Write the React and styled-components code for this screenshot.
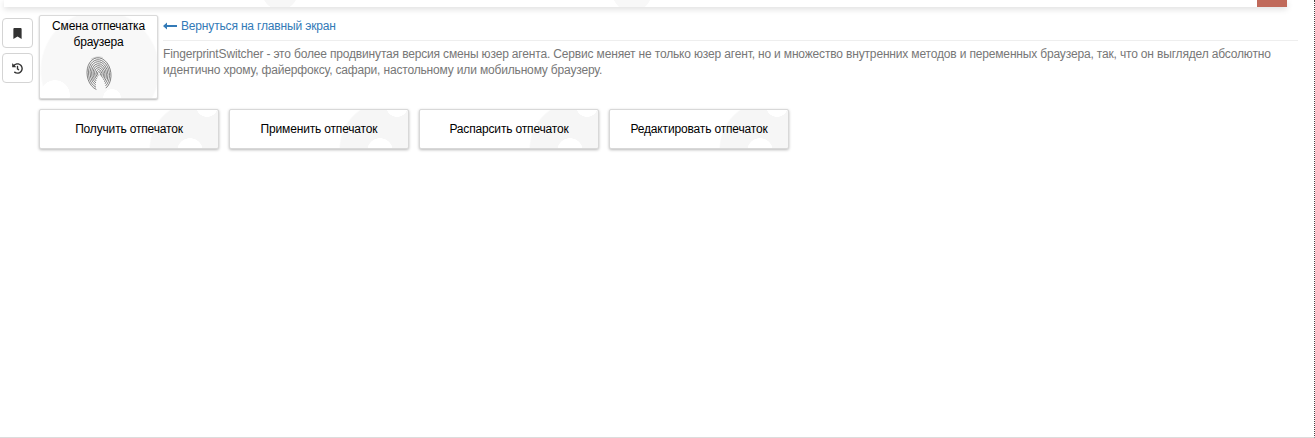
import React from 'react';
import styled, { createGlobalStyle } from 'styled-components';
import { FaBookmark, FaHistory } from 'react-icons/fa';

const GlobalStyle = createGlobalStyle`
  html, body {
    margin: 0;
    padding: 0;
    background: #fff;
    font-family: "Liberation Sans", Arial, sans-serif;
    font-size: 12px;
    letter-spacing: -0.165px;
  }
`;

const Page = styled.div`
  box-sizing: border-box;
  width: 1315px;
  height: 438px;
  overflow: hidden;
  border-bottom: 1px solid #dcdcdc;
  border-right: 1px dotted #444;
`;

const TopBar = styled.div`
  display: flex;
  justify-content: flex-end;
  width: 1283px;
  height: 7px;
  margin-left: 4px;
  background:
    radial-gradient(circle 18px at 276px -8px, #f7f7f7 97%, transparent),
    radial-gradient(circle 20px at 628px -8px, #f8f8f8 97%, transparent),
    #fff;
  box-shadow: 0 2px 6px rgba(0, 0, 0, 0.14);
`;

const CloseTab = styled.div`
  width: 30px;
  background: #c0695a;
`;

const Main = styled.div`
  display: flex;
  padding: 8px 16px 0 2px;
`;

const Sidebar = styled.div`
  display: flex;
  flex-direction: column;
  gap: 5px;
  width: 31px;
  margin: 3px 6px 0 0;
  flex: none;
`;

const SideButton = styled.button`
  display: flex;
  align-items: center;
  justify-content: center;
  box-sizing: border-box;
  width: 31px;
  height: 30px;
  padding: 0;
  background: #fff;
  border: 1px solid #d4d4d4;
  border-radius: 4px;
  color: #333;
  font-size: 11px;
`;

const Content = styled.div`
  flex: 1;
  min-width: 0;
`;

const TopRow = styled.div`
  display: flex;
  gap: 5px;
`;

const ToolCard = styled.div`
  box-sizing: border-box;
  display: flex;
  flex-direction: column;
  align-items: center;
  flex: none;
  width: 119px;
  height: 84px;
  padding-top: 2px;
  border: 1px solid #dadada;
  border-radius: 2px;
  box-shadow: 0 1px 2px rgba(0, 0, 0, 0.28);
  color: #000;
  line-height: 16px;
  text-align: center;
  background:
    radial-gradient(circle 15px at 15px 79px, #fff 97%, transparent),
    radial-gradient(circle 9px at 72px 82px, #fff 97%, transparent),
    radial-gradient(circle 60px at 60px 54px, #f8f8f8 97%, transparent),
    #fff;
`;

const Print = styled.svg`
  display: block;
  width: 26px;
  height: 35px;
  margin-top: 6px;
`;

const Info = styled.div`
  flex: 1;
  min-width: 0;
`;

const BackLink = styled.a`
  display: flex;
  align-items: center;
  gap: 4px;
  box-sizing: border-box;
  height: 26px;
  padding-bottom: 4px;
  border-bottom: 1px solid #eee;
  color: #337ab7;
  text-decoration: none;
`;

const Arrow = styled.svg`
  display: block;
  width: 14px;
  height: 8px;
`;

const Description = styled.p`
  margin: 5px 0 0;
  color: #777;
  line-height: 16px;
`;

const ActionRow = styled.div`
  display: flex;
  gap: 10px;
  margin-top: 10px;
`;

const ActionButton = styled.button`
  box-sizing: border-box;
  width: 180px;
  height: 40px;
  padding: 0;
  border: 1px solid #d8d8d8;
  border-radius: 2px;
  box-shadow: 0 1px 3px rgba(0, 0, 0, 0.28);
  color: #000;
  font-family: inherit;
  font-size: 12px;
  letter-spacing: inherit;
  background:
    radial-gradient(circle 13px at 150px 41px, #fff 97%, transparent),
    radial-gradient(circle 11px at 167px -4px, #fff 97%, transparent),
    radial-gradient(circle 48px at 157px 39px, #f6f6f6 97%, transparent),
    #fff;
`;

// loops of the print, from the core outwards; the gap at the bottom closes as they grow
const loops = [1.4, 2.9, 4.4, 5.9, 7.4, 8.9, 10.4, 11.9].map((rx, i) => {
  const ry = rx * 1.32 + 0.6;
  const gap = 0.9 - i * 0.07;
  const dx = rx * Math.sin(gap);
  const dy = ry * Math.cos(gap);
  return `M${13 - dx} ${18 + dy}A${rx} ${ry} 0 1 1 ${13 + dx} ${18 + dy}`;
});

function Fingerprint() {
  return (
    <Print viewBox="0 0 26 35" fill="none" stroke="#6a6a6a" strokeWidth="0.8">
      <g transform="rotate(-8 13 18)">
        <path d="M7 2.2C10.5 .4 15.5 .4 19 2.2" stroke="#c8c8c8" strokeWidth="0.7" />
        {loops.map((d) => (
          <path key={d} d={d} />
        ))}
      </g>
    </Print>
  );
}

const actions = ['Получить отпечаток', 'Применить отпечаток', 'Распарсить отпечаток', 'Редактировать отпечаток'];

export default function App() {
  return (
    <Page>
      <GlobalStyle />
      <TopBar>
        <CloseTab />
      </TopBar>
      <Main>
        <Sidebar>
          <SideButton><FaBookmark /></SideButton>
          <SideButton><FaHistory /></SideButton>
        </Sidebar>
        <Content>
          <TopRow>
            <ToolCard>
              <div>Смена отпечатка<br />браузера</div>
              <Fingerprint />
            </ToolCard>
            <Info>
              <BackLink href="#">
                <Arrow viewBox="0 0 14 8" fill="#337ab7">
                  <path d="M0 4 4 .5V3H14V5H4V7.5Z" />
                </Arrow>
                Вернуться на главный экран
              </BackLink>
              <Description>
                FingerprintSwitcher - это более продвинутая версия смены юзер агента. Сервис меняет не только юзер агент, но и множество внутренних методов и переменных браузера, так, что он выглядел абсолютно идентично хрому, файерфоксу, сафари, настольному или мобильному браузеру.
              </Description>
            </Info>
          </TopRow>
          <ActionRow>
            {actions.map((label) => (
              <ActionButton key={label}>{label}</ActionButton>
            ))}
          </ActionRow>
        </Content>
      </Main>
    </Page>
  );
}
